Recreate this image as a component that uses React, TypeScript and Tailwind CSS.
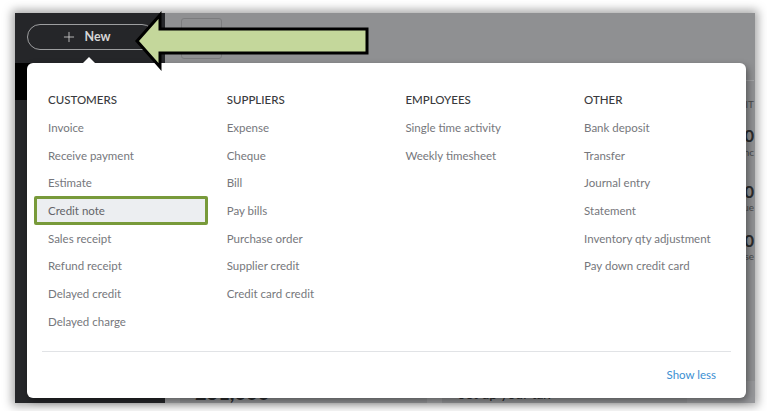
import { Plus } from 'lucide-react'

type Column = {
  title: string
  items: string[]
}

const columns: Column[] = [
  {
    title: 'CUSTOMERS',
    items: [
      'Invoice',
      'Receive payment',
      'Estimate',
      'Credit note',
      'Sales receipt',
      'Refund receipt',
      'Delayed credit',
      'Delayed charge',
    ],
  },
  {
    title: 'SUPPLIERS',
    items: ['Expense', 'Cheque', 'Bill', 'Pay bills', 'Purchase order', 'Supplier credit', 'Credit card credit'],
  },
  {
    title: 'EMPLOYEES',
    items: ['Single time activity', 'Weekly timesheet'],
  },
  {
    title: 'OTHER',
    items: ['Bank deposit', 'Transfer', 'Journal entry', 'Statement', 'Inventory qty adjustment', 'Pay down credit card'],
  },
]

const highlighted = 'Credit note'

function CreateMenu() {
  return (
    <div className="absolute left-[27px] top-[63px] w-[719px] h-[335px] rounded-[6px] bg-white shadow-[2px_3px_7px_rgba(0,0,0,0.4)] flex flex-col">
      {/* caret under the New button */}
      <div className="absolute -top-[6px] left-[55px] w-0 h-0 border-l-[7px] border-r-[7px] border-b-[7px] border-l-transparent border-r-transparent border-b-white" />

      <div className="flex pl-[21px] pt-[23px]">
        {columns.map((col) => (
          <div key={col.title} className="w-[178.7px] shrink-0 flex flex-col">
            <div className="h-[27.7px] flex items-center text-[11.5px] font-medium text-[#393a3d]">
              {col.title}
            </div>
            {col.items.map((item) =>
              item === highlighted ? (
                <div
                  key={item}
                  className="h-[29px] -my-[0.65px] -ml-[14px] w-[174px] pl-[11px] flex items-center rounded-[2px] border-[3px] border-[#789a3a] bg-[#eceef1] text-[11.5px] text-[#636469]"
                >
                  {item}
                </div>
              ) : (
                <div key={item} className="h-[27.7px] flex items-center text-[11.5px] text-[#76777c]">
                  {item}
                </div>
              )
            )}
          </div>
        ))}
      </div>

      <div className="mt-auto mx-[15px] border-t border-[#e1e3e6]" />
      <div className="h-[46px] flex items-center justify-end pr-[30px]">
        <span className="text-[11.5px] text-[#3b8fd2]">Show less</span>
      </div>
    </div>
  )
}

function Pointer() {
  return (
    <svg
      className="absolute left-[130px] top-[10px]"
      width="245"
      height="62"
      viewBox="0 0 245 62"
    >
      <polygon
        points="7,31 30,5 30,19 237,19 237,43 30,43 30,57"
        fill="#c4d79b"
        stroke="#000"
        strokeWidth="3"
        strokeLinejoin="miter"
      />
    </svg>
  )
}

export default function App() {
  return (
    <div
      className="relative w-[767px] h-[411px] bg-white overflow-hidden pt-[13px] pl-[15px]"
      style={{ fontFamily: 'Lato, "Open Sans", sans-serif' }}
    >
      <div className="w-[740px] h-[390px] flex overflow-hidden shadow-[0_0_9px_3px_rgba(0,0,0,0.35)]">
        {/* sidebar */}
        <div className="w-[150px] bg-[#252629] flex flex-col">
          <div className="h-[50px] pt-[11px] pl-[12px]">
            <div className="w-[128px] h-[26px] rounded-full border-[1.5px] border-[#9d9ea0] flex items-center justify-center gap-[7px] pr-[10px]">
              <Plus size={16} strokeWidth={1.2} className="text-[#d8d8d8]" />
              <span className="text-[12.5px] font-bold text-[#d6d6d6]">New</span>
            </div>
          </div>
          <div className="h-[37px] bg-black" />
          <div className="flex-1" />
        </div>

        {/* dimmed dashboard */}
        <div className="flex-1 bg-[#8f9092] flex flex-col">
          <div className="h-[50px] pt-[5px] pl-[16px]">
            <div className="w-[41px] h-[41px] rounded-[3px] border-[1.5px] border-[#7b7c7e]" />
          </div>

          {/* profit & loss card, mostly under the menu */}
          <div className="flex-1 flex justify-end">
            <div className="w-[80px] flex flex-col items-end pr-[1px] text-[#2a2b2d] whitespace-nowrap">
              <div className="self-stretch mt-[17px] border-t border-[#a3a4a6]" />
              <div className="mt-[17px] h-[12px] leading-[12px] text-[10px] text-[#4a4b4d]">PROFIT</div>
              <div className="mt-[16px] h-[20px] leading-[20px] text-[17px] font-bold">$30</div>
              <div className="h-[12px] leading-[12px] text-[10px] text-[#4a4b4d]">Inc</div>
              <div className="mt-[25px] h-[18px] leading-[18px] text-[17px] font-bold">$00</div>
              <div className="h-[12px] leading-[12px] text-[10px] text-[#4a4b4d]">Due</div>
              <div className="mt-[19px] h-[18px] leading-[18px] text-[17px] font-bold">$00</div>
              <div className="h-[12px] leading-[12px] text-[10px] text-[#4a4b4d]">Expense</div>
            </div>
          </div>

          {/* lower dashboard cards, only a sliver shows below the menu */}
          <div className="h-[22px] flex items-end">
            <div className="w-[15px] h-full bg-[#9b9c9e]" />
            <div className="pl-[15px] w-[247px] text-[20px] leading-[22px] font-bold text-[#2a2b2d]">231,000</div>
            <div className="w-[15px] h-full bg-[#9b9c9e]" />
            <div className="pl-[16px] w-[245px] text-[14px] leading-[18px] text-[#2a2b2d]">Set up your tax</div>
            <div className="flex-1 h-full bg-[#96979a]" />
          </div>
        </div>
      </div>

      <CreateMenu />
      <Pointer />
    </div>
  )
}
